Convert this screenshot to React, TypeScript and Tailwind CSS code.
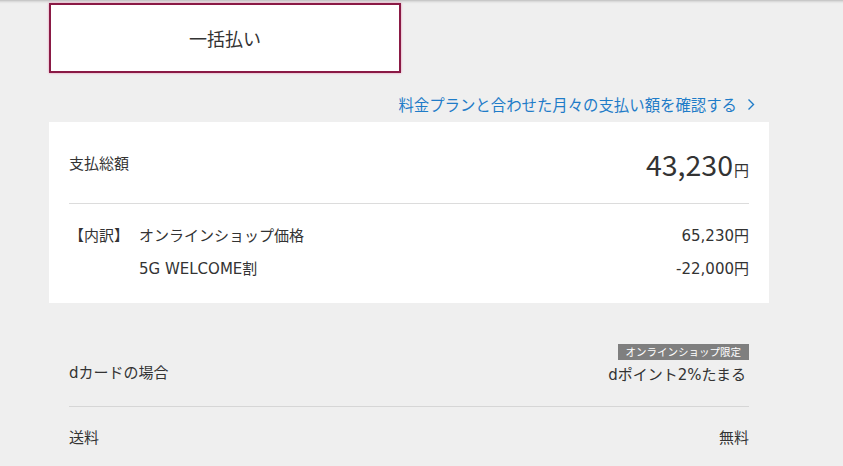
export default function App() {
  const font = { fontFamily: '"DejaVu Sans", "Noto Sans CJK JP", sans-serif' };
  const rows = [
    { label: "【内訳】", name: "オンラインショップ価格", value: "65,230円" },
    { label: "", name: "5G WELCOME割", value: "-22,000円" },
  ];

  return (
    <div
      className="min-h-screen bg-[#efefef] pt-[3px] pl-[49px] text-[#333] shadow-[inset_0_4px_3px_-3px_rgba(0,0,0,0.25)]"
      style={font}
    >
      <div className="w-[720px]">
        <button className="flex h-[70px] w-[352px] items-center justify-center border-2 border-[#8a1a45] bg-white text-[18px] text-[#333] shadow-[0_0_2px_rgba(235,130,170,0.9)] [font-family:'Noto_Sans_CJK_JP',sans-serif]">
          一括払い
        </button>

        <div className="mt-[19px] mb-[6px] flex justify-end pr-[14px]">
          <a className="flex items-center gap-[10px] text-[15.4px] leading-[24px] text-[#1f7cc8] [font-family:'Noto_Sans_CJK_JP',sans-serif]">
            料金プランと合わせた月々の支払い額を確認する
            <svg width="8" height="13" viewBox="0 0 8 13" fill="none">
              <path d="M1.5 1.5 L6.5 6.5 L1.5 11.5" stroke="#1f7cc8" strokeWidth="1.4" />
            </svg>
          </a>
        </div>

        <div className="bg-white px-5">
          <div className="flex h-[82px] items-center justify-between border-b border-[#dcdcdc] pt-[3px]">
            <span className="text-[15px]">支払総額</span>
            <span className="flex items-baseline">
              <span className="text-[28.5px] leading-none [font-family:'Noto_Sans_CJK_JP',sans-serif]">43,230</span>
              <span className="ml-[1px] text-[15px] leading-none">円</span>
            </span>
          </div>
          <div className="pt-4 pb-[17px]">
            {rows.map((r) => (
              <div key={r.name} className="grid h-[33px] grid-cols-[70px_1fr_auto] items-center text-[15px]">
                <span>{r.label}</span>
                <span>{r.name}</span>
                <span>{r.value}</span>
              </div>
            ))}
          </div>
        </div>

        <div className="mt-[21px] px-5">
          <div className="flex items-end justify-between border-b border-[#d6d6d6] pt-5 pb-[20px]">
            <span className="mb-[2px] text-[15px] leading-[22px]">dカードの場合</span>
            <div className="flex flex-col items-end">
              <span className="h-4 bg-[#7f7f7f] px-[8px] text-[10.5px] leading-4 text-white">オンラインショップ限定</span>
              <span className="mt-[4px] mr-[3px] text-[15px] leading-[22px]">dポイント2%たまる</span>
            </div>
          </div>
          <div className="flex items-center justify-between pt-5 text-[15px] leading-[22px]">
            <span>送料</span>
            <span>無料</span>
          </div>
        </div>
      </div>
    </div>
  );
}
